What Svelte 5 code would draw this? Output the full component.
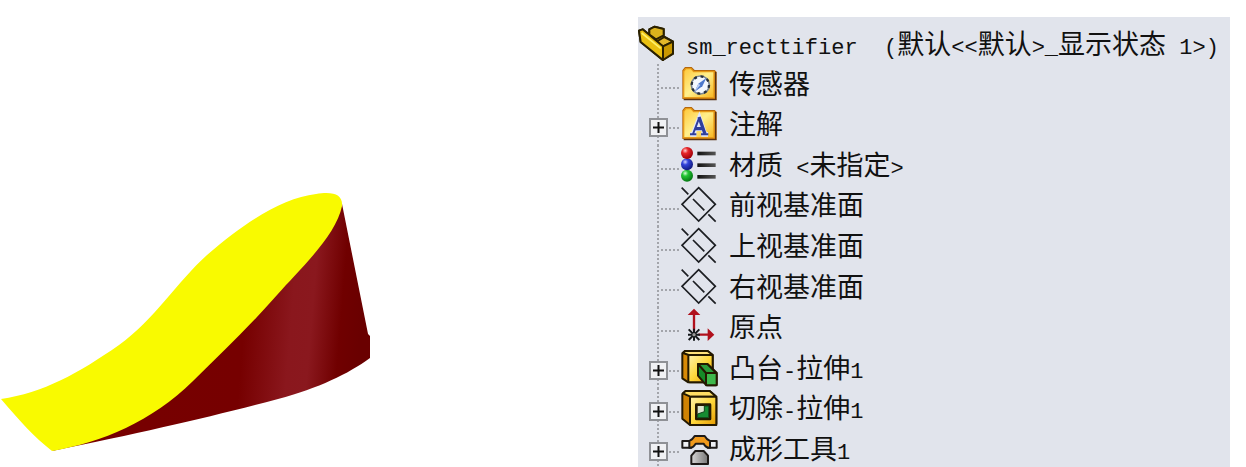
<script>
    // feature tree, top to bottom
    const root = "sm_recttifier  (默认<<默认>_显示状态 1>)";

    let items = $state([
        { label: "传感器", icon: "sensor" },
        { label: "注解", icon: "note", expandable: true, open: false },
        { label: "材质 <未指定>", icon: "material" },
        { label: "前视基准面", icon: "plane" },
        { label: "上视基准面", icon: "plane" },
        { label: "右视基准面", icon: "plane" },
        { label: "原点", icon: "origin" },
        { label: "凸台-拉伸1", icon: "boss", expandable: true, open: false },
        { label: "切除-拉伸1", icon: "cut", expandable: true, open: false },
        { label: "成形工具1", icon: "form", expandable: true, open: false },
    ]);

    // latin is half the width of a chinese character, so it gets its own font
    function runs(text) {
        return text.match(/[\x20-\x7e]+|[^\x20-\x7e]+/g).map((part) => ({
            part,
            latin: part.charCodeAt(0) < 127,
        }));
    }
</script>

{#snippet words(text)}
    {#each runs(text) as run}<span class:latin={run.latin}>{run.part}</span>{/each}
{/snippet}

{#snippet folder()}
    <path d="M4 99V13L12 3H32L41 12H101L107 18V100Z" fill="#b5680c" />
    <path d="M8 95V16L14 8H30L38 17H99V95Z" fill="url(#folder)" stroke="#e69a18" stroke-width="4" />
    <path d="M104 18V100M8 101H107" stroke="#5a3210" stroke-width="4" />
{/snippet}

<main>
    <div class="viewport">
        <svg class="model" viewBox="0 0 370 265" role="img" aria-label="sm_recttifier">
            <defs>
                <linearGradient id="side" gradientUnits="userSpaceOnUse" x1="80" y1="0" x2="370" y2="24">
                    <stop offset="0" stop-color="#780000" />
                    <stop offset=".6" stop-color="#760000" />
                    <stop offset=".76" stop-color="#8a171d" />
                    <stop offset=".83" stop-color="#8a181e" />
                    <stop offset=".93" stop-color="#700000" />
                    <stop offset="1" stop-color="#6a0000" />
                </linearGradient>
            </defs>
            <path
                d="M342 14L368 144L370 146V168C348 184 319 198 278 209C210 227 145 242 52 261L180 190L270 85Z"
                fill="url(#side)"
            />
            <path
                d="M1 209C43 203 79 183 119 155C154 130 177 92 207 65C246 31 283 8 316 4C334 1 343 5 342 16C336 46 299 80 277 105C249 137 221 163 193 191C151 232 103 252 52 261C34 247 19 230 1 209Z"
                fill="#f9fa00"
            />
        </svg>
    </div>

    <section class="panel">
        <ul class="tree">
            <li class="root">
                <svg class="icon" viewBox="0 0 108 108" aria-hidden="true">
                    <g stroke="#2b2100" stroke-width="6" stroke-linejoin="round">
                        <path d="M3 17L14 13L34 29V13L50 5L77 12V34L105 50V86L74 105L8 51Z" fill="#c49800" />
                        <path d="M34 13L50 5L77 12V31L54 43L34 29Z" fill="#dcb31c" />
                        <path d="M54 51L79 36L105 50L75 64Z" fill="#e3b72a" />
                        <path d="M75 64L105 50V86L75 105Z" fill="#c99700" />
                        <path d="M3 17L14 13L75 64V105L8 51Z" fill="#eac010" />
                    </g>
                    <path d="M11 24L68 70" stroke="#fff16a" stroke-width="5" />
                </svg>
                <span class="label">{@render words(root)}</span>
            </li>
            {#each items as item}
                <li>
                    <span class="gutter">
                        {#if item.expandable}
                            <button
                                type="button"
                                aria-label={item.label}
                                aria-expanded={item.open}
                                onclick={() => (item.open = !item.open)}
                            >
                                <svg viewBox="0 0 15 15" aria-hidden="true">
                                    <path
                                        d={item.open ? "M2 7.5H13" : "M2 7.5H13M7.5 2V13"}
                                        stroke="#111"
                                        stroke-width="2"
                                    />
                                </svg>
                            </button>
                        {/if}
                    </span>
                    <svg class="icon" viewBox="0 0 108 108" fill="none" aria-hidden="true">
                        {#if item.icon === "sensor"}
                            {@render folder()}
                            <circle cx="58" cy="57" r="27" fill="#f3f8ff" stroke="#7b8795" stroke-width="5" />
                            <circle cx="58" cy="57" r="26" stroke="#26303c" stroke-width="7" stroke-dasharray="9 11.4" />
                            <path d="M76 36L64 61L41 77L52 53Z" fill="#4d79cc" />
                            <path d="M58 57L41 77L52 53Z" fill="#b9cdf2" />
                        {:else if item.icon === "note"}
                            {@render folder()}
                            <path
                                d="M28 85H46M61 85H81M36 85L55 36L72 85M42 68H65"
                                stroke="#dfe6ff"
                                stroke-width="14"
                            />
                            <path d="M27 85H46M60 85H82M36 84L54 37" stroke="#303f9c" stroke-width="6" />
                            <path d="M54 33L72 84M42 68H65" stroke="#303f9c" stroke-width="10" />
                        {:else if item.icon === "material"}
                            <circle cx="18" cy="86" r="18" fill="url(#green)" />
                            <circle cx="18" cy="52" r="18" fill="url(#blue)" />
                            <circle cx="18" cy="18" r="18" fill="url(#red)" />
                            <g fill="url(#bar)">
                                <rect x="49" y="14" width="55" height="11" />
                                <rect x="49" y="49" width="55" height="11" />
                                <rect x="49" y="84" width="55" height="11" />
                            </g>
                        {:else if item.icon === "plane"}
                            <g stroke="#1c1e22" stroke-width="5">
                                <path d="M53 2L103 52L53 102L3 52Z" />
                                <path d="M2 2L22 22M36 36L70 70M82 82L104 104" />
                            </g>
                        {:else if item.icon === "origin"}
                            <g stroke="#b0101c" stroke-width="7">
                                <path d="M39 12V66M52 77H85" />
                                <path d="M39 -1L58 18H20ZM100 77L80 58V96Z" fill="#b0101c" stroke="none" />
                            </g>
                            <path
                                d="M21 77H57M39 59V95M23 61L55 93M55 61L23 93"
                                stroke="#15171a"
                                stroke-width="6"
                            />
                            <circle cx="39" cy="77" r="5" fill="#999" />
                        {:else if item.icon === "boss"}
                            <g stroke="#241900" stroke-width="6" stroke-linejoin="round">
                                <path d="M4 10L12 3H80L95 15V97H22L4 85Z" fill="#d98a05" />
                                <path d="M6 9L12 3H80L95 15H23Z" fill="#ffe27a" />
                                <rect x="22" y="15" width="73" height="82" rx="4" fill="url(#gold)" />
                                <path d="M51 42H79L107 68V106H76L51 77Z" fill="#168b28" />
                                <path d="M51 42H79L106 69H75Z" fill="#2c9c3a" />
                                <rect x="75" y="69" width="32" height="37" rx="3" fill="#3fb84c" />
                            </g>
                        {:else if item.icon === "cut"}
                            <g stroke="#241900" stroke-width="6" stroke-linejoin="round">
                                <path d="M4 12L14 3H86L106 20V105H27L4 86Z" fill="#cf8303" />
                                <path d="M6 10L14 3H86L106 20H28Z" fill="#ffde64" />
                                <rect x="27" y="20" width="79" height="85" rx="4" fill="url(#gold)" />
                                <rect x="46" y="44" width="41" height="43" fill="#dce5cf" stroke-width="8" />
                                <path d="M70 48H83V83H50V72L70 65Z" fill="#168b32" stroke="#0a4316" stroke-width="3" />
                            </g>
                        {:else}
                            <g stroke="#1d1a18" stroke-width="6" stroke-linejoin="round">
                                <path d="M4 30H31V50H4ZM80 30H107V50H80Z" fill="#eef0f4" />
                                <path
                                    d="M25 30Q34 27 41 15H71Q78 27 87 30V50Q75 51 68 38H44Q36 51 25 50Z"
                                    fill="#f09a1c"
                                />
                                <path d="M31 99V74L43 60H68L81 74V99Z" fill="url(#steel)" />
                            </g>
                        {/if}
                    </svg>
                    <span class="label">{@render words(item.label)}</span>
                </li>
            {/each}
        </ul>
    </section>

    <!-- fills shared by the icons -->
    <svg class="defs" aria-hidden="true">
        <defs>
            <linearGradient id="folder" x2="1" y2="1">
                <stop offset="0" stop-color="#ffc83a" />
                <stop offset=".5" stop-color="#fff08c" />
                <stop offset="1" stop-color="#f7b51e" />
            </linearGradient>
            <linearGradient id="gold" x2="1" y2="1">
                <stop offset="0" stop-color="#fff3ae" />
                <stop offset=".5" stop-color="#ffd83c" />
                <stop offset="1" stop-color="#e59a00" />
            </linearGradient>
            <linearGradient id="steel">
                <stop offset="0" stop-color="#d8d8d8" />
                <stop offset="1" stop-color="#777" />
            </linearGradient>
            <linearGradient id="bar">
                <stop offset="0" stop-color="#111" />
                <stop offset="1" stop-color="#555" />
            </linearGradient>
            <radialGradient id="red" cx=".35" cy=".3" r=".7">
                <stop offset="0" stop-color="#ffd0d0" />
                <stop offset=".35" stop-color="#e8262a" />
                <stop offset="1" stop-color="#a00008" />
            </radialGradient>
            <radialGradient id="blue" cx=".35" cy=".3" r=".7">
                <stop offset="0" stop-color="#d3d6ff" />
                <stop offset=".35" stop-color="#3344dc" />
                <stop offset="1" stop-color="#101a80" />
            </radialGradient>
            <radialGradient id="green" cx=".35" cy=".3" r=".7">
                <stop offset="0" stop-color="#d8ffd8" />
                <stop offset=".35" stop-color="#22c634" />
                <stop offset="1" stop-color="#067a14" />
            </radialGradient>
        </defs>
    </svg>
</main>

<style>
    :global(body) {
        background: #fff;
    }

    main {
        display: grid;
        grid-template-columns: minmax(0, 638fr) minmax(0, 592fr);
        height: 100vh;
        min-height: 440px;
        padding-right: 16px;
        box-sizing: border-box;
        overflow: hidden;
    }

    .viewport {
        padding-top: 190px;
    }

    .model {
        display: block;
        width: 58%;
    }

    .panel {
        display: flex;
        margin-top: 17px;
        padding-top: 6px;
        background: #e1e4ec;
        overflow: hidden;
    }

    .tree {
        flex: 1;
        display: grid;
        grid-auto-rows: minmax(36px, 1fr);
        margin: 0 0 -2px;
        padding: 0;
        list-style: none;
    }

    li {
        display: flex;
        align-items: center;
        min-height: 0;
    }

    .gutter {
        display: flex;
        align-items: center;
        align-self: stretch;
        flex: none;
        width: 43px;
        padding: 6px 0 0 11px;
        box-sizing: border-box;
        background:
            repeating-linear-gradient(to bottom, #a3a5ab 0 2px, transparent 2px 4px) 19px 0 / 2px 100% no-repeat,
            repeating-linear-gradient(to right, #a3a5ab 0 2px, transparent 2px 4px) 23px 23px / 20px 2px no-repeat;
    }

    button {
        display: flex;
        width: 19px;
        height: 19px;
        padding: 0;
        border: 2px solid #8f9196;
        background: #f0f1f4;
        cursor: pointer;
    }

    button svg {
        width: 15px;
        height: 15px;
    }

    .icon {
        flex: none;
        width: 36px;
        height: 36px;
        overflow: visible;
    }

    .label {
        display: flex;
        align-items: baseline;
        margin-left: 12px;
        padding-bottom: 2px;
        color: #111;
        font-family: "Noto Sans CJK SC", sans-serif;
        font-size: 27px;
        line-height: 36px;
        white-space: pre;
    }

    .root .label {
        padding-bottom: 0;
    }

    .latin {
        font-family: "Liberation Mono", monospace;
        font-size: 22px;
        line-height: 24px;
    }

    .defs {
        position: absolute;
        width: 0;
        height: 0;
    }
</style>
